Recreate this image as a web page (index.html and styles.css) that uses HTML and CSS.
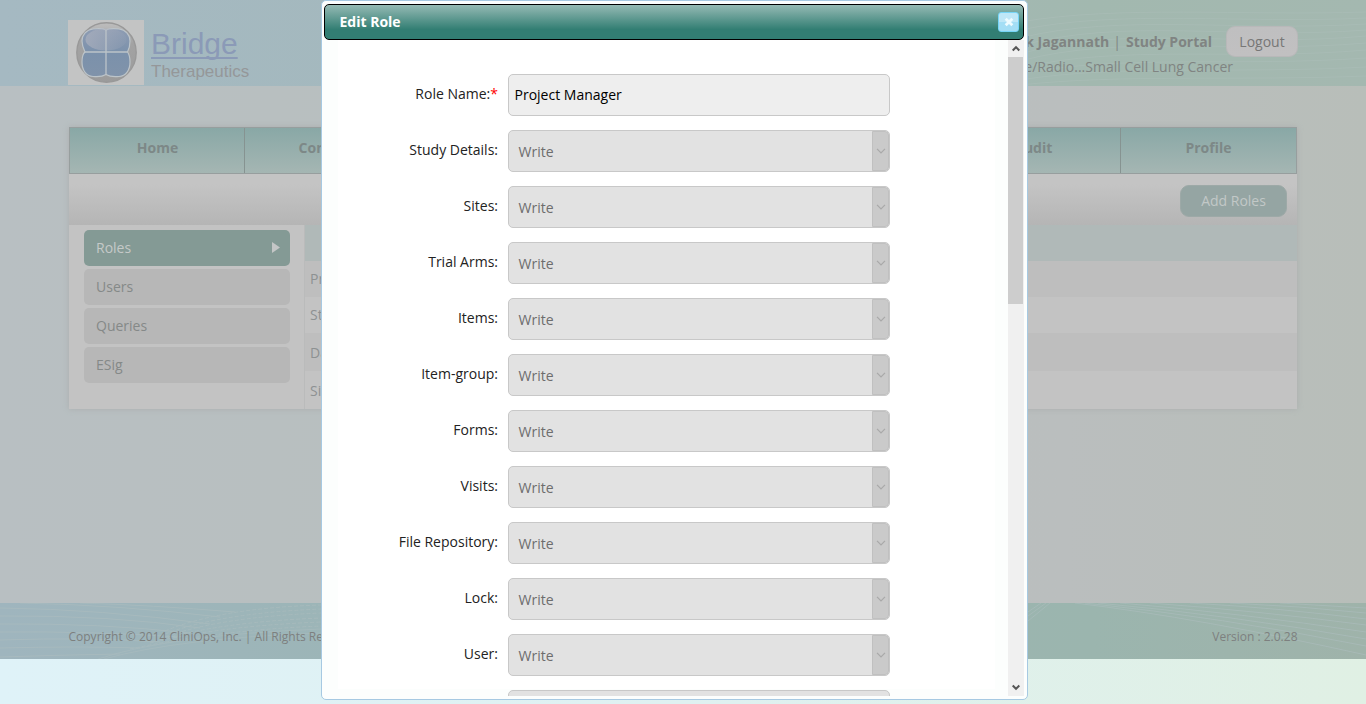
FILE: index.html
```html
<!DOCTYPE html>
<html lang="en">
<head>
<meta charset="utf-8">
<title>Edit Role</title>
<link rel="stylesheet" href="styles.css">
</head>
<body>
<header class="header">
  <svg class="waves" viewBox="0 0 1366 86" preserveAspectRatio="none" fill="none" stroke="#adbfba" stroke-width="1" opacity=".55">
    <path d="M1020 22C1120 5 1240 16 1366 12M1020 30C1120 9 1240 24 1366 18M1020 38C1120 13 1240 32 1366 24M1020 46C1120 17 1240 40 1366 30M1020 54C1120 24 1240 48 1366 36M1020 61C1120 34 1240 54 1366 43M1020 68C1120 44 1240 61 1366 50M1020 74C1120 54 1240 67 1366 58M1020 80C1120 64 1240 74 1366 67M1020 85C1120 74 1240 81 1366 76"/>
  </svg>
  <div class="wrap header-row">
    <div class="brand">
      <svg class="brand-mark" width="76" height="65" viewBox="0 0 76 65">
        <defs>
          <linearGradient id="petal" x1="0" y1="0" x2="0" y2="1"><stop offset="0" stop-color="#8e9cb3"/><stop offset=".5" stop-color="#7b91ab"/><stop offset="1" stop-color="#8093aa"/></linearGradient>
          <linearGradient id="shine" x1="0" y1="0" x2="1" y2="0"><stop offset="0" stop-color="#a9afbd" stop-opacity=".75"/><stop offset="1" stop-color="#a9afbd" stop-opacity=".1"/></linearGradient>
          <linearGradient id="ring" x1="0" y1="0" x2="0" y2="1"><stop offset="0" stop-color="#bdbdbd"/><stop offset=".35" stop-color="#a3a3a3"/><stop offset="1" stop-color="#9b9b9b"/></linearGradient>
        </defs>
        <rect width="76" height="65" fill="#c3c4c4"/>
        <circle cx="38.500" cy="32.500" r="29.700" fill="url(#ring)" stroke="#999" stroke-width="1.400"/>
        <path d="M38 10C34 8 29 8.500 25 9C18 10 14 15 14 21C14 25 15.500 29 17 32C14.500 34 14 38 14 42C14 50 18 56 25 56.500C30 57 34 57 38 54.500C42 57 46 57 51 56.500C58 56 62 50 62 42C62 38 61 34 59.500 32C61 29 62 25 62 21C62 15 58 10 51 9C46 8.500 42 8 38 10Z" fill="url(#petal)" stroke="#bcc4c9" stroke-width="1.200"/>
        <ellipse cx="38" cy="19.500" rx="20.500" ry="11" fill="url(#shine)"/>
        <path d="M38 10V55M17 32H59.500" stroke="#bcc4c9" stroke-width="1.300"/>
      </svg>
      <div class="brand-text">
        <div class="brand-name">Bridge</div>
        <div class="brand-sub">Therapeutics</div>
      </div>
    </div>
    <div class="account">
      <div class="account-top"><b>Deepak Jagannath</b><span>|</span><b>Study Portal</b><button class="logout">Logout</button></div>
      <div class="study">e/Radio...Small Cell Lung Cancer</div>
    </div>
  </div>
</header>
<main class="main">
  <div class="wrap panel">
    <nav class="nav"><a>Home</a><a>Configure</a><a></a><a></a><a></a><a>Audit</a><a>Profile</a></nav>
    <div class="toolbar"><button class="add">Add Roles</button></div>
    <div class="content">
      <aside class="side">
        <a class="side-item active">Roles<svg width="8" height="12" viewBox="0 0 8 12"><path d="M0 0L8 5.500L0 11Z" fill="#c4c6c6"/></svg></a>
        <a class="side-item">Users</a>
        <a class="side-item">Queries</a>
        <a class="side-item">ESig</a>
      </aside>
      <div class="table">
        <div class="trow thead"></div>
        <div class="trow odd">Project Manager</div>
        <div class="trow">Study Manager</div>
        <div class="trow odd tall">Data Manager</div>
        <div class="trow tall">Site Manager</div>
      </div>
    </div>
  </div>
</main>
<footer class="footer">
  <svg class="waves" viewBox="0 0 1366 56" fill="none" stroke="#afbfc0" stroke-width="1" opacity=".55">
    <path d="M0 5Q100 6 210 21M0 13Q110 12 200 25M0 21Q100 20 190 30M0 29Q90 28 180 34M0 37Q90 34 160 39M0 45Q80 43 140 45M0 54Q60 52 120 51M20 0Q120 2 220 14M80 0Q150 2 235 9"/>
    <path d="M98 56Q170 32 321 26M104 56Q180 35 321 30" opacity=".8"/>
    <path stroke-dasharray="4 2" d="M165 28Q220 5 321 2M165 31Q220 10 321 6M165 34Q220 14 321 10M160 37Q220 19 321 15M150 40Q220 23 321 19M130 46Q220 27 321 23"/>
    <path d="M1028 9L1041 0M1028 13L1046 0M1028 18L1050 0M1075 0Q1200 15 1366 52M1085 0Q1220 14 1366 43M1098 0Q1230 12 1366 36M1120 0Q1240 10 1366 29M1150 0Q1260 8 1366 22M1190 0Q1280 5 1366 16M1230 0Q1300 3 1366 10M1280 0L1366 5"/>
  </svg>
  <div class="wrap footer-row"><span>Copyright © 2014 CliniOps, Inc. | All Rights Reserved.</span><span>Version : 2.0.28</span></div>
</footer>

<section class="dialog">
  <div class="dialog-title"><span>Edit Role</span>
    <button class="close"><svg width="10" height="10" viewBox="0 0 10 10"><path d="M1.700 1.700L8.300 8.300M8.300 1.700L1.700 8.300" stroke="#eefbff" stroke-width="2.800"/></svg></button>
  </div>
  <div class="dialog-main">
    <div class="form">
      <div class="field"><label>Role Name:<i>*</i></label><div class="input">Project Manager</div></div>
      <div class="field"><label>Study Details:</label><div class="select"><span>Write</span><em><svg width="10" height="6" viewBox="0 0 10 6"><path d="M1 .8L5 4.800L9 .8"/></svg></em></div></div>
      <div class="field"><label>Sites:</label><div class="select"><span>Write</span><em><svg width="10" height="6" viewBox="0 0 10 6"><path d="M1 .8L5 4.800L9 .8"/></svg></em></div></div>
      <div class="field"><label>Trial Arms:</label><div class="select"><span>Write</span><em><svg width="10" height="6" viewBox="0 0 10 6"><path d="M1 .8L5 4.800L9 .8"/></svg></em></div></div>
      <div class="field"><label>Items:</label><div class="select"><span>Write</span><em><svg width="10" height="6" viewBox="0 0 10 6"><path d="M1 .8L5 4.800L9 .8"/></svg></em></div></div>
      <div class="field"><label>Item-group:</label><div class="select"><span>Write</span><em><svg width="10" height="6" viewBox="0 0 10 6"><path d="M1 .8L5 4.800L9 .8"/></svg></em></div></div>
      <div class="field"><label>Forms:</label><div class="select"><span>Write</span><em><svg width="10" height="6" viewBox="0 0 10 6"><path d="M1 .8L5 4.800L9 .8"/></svg></em></div></div>
      <div class="field"><label>Visits:</label><div class="select"><span>Write</span><em><svg width="10" height="6" viewBox="0 0 10 6"><path d="M1 .8L5 4.800L9 .8"/></svg></em></div></div>
      <div class="field"><label>File Repository:</label><div class="select"><span>Write</span><em><svg width="10" height="6" viewBox="0 0 10 6"><path d="M1 .8L5 4.800L9 .8"/></svg></em></div></div>
      <div class="field"><label>Lock:</label><div class="select"><span>Write</span><em><svg width="10" height="6" viewBox="0 0 10 6"><path d="M1 .8L5 4.800L9 .8"/></svg></em></div></div>
      <div class="field"><label>User:</label><div class="select"><span>Write</span><em><svg width="10" height="6" viewBox="0 0 10 6"><path d="M1 .8L5 4.800L9 .8"/></svg></em></div></div>
      <div class="field"><label></label><div class="select plain"></div></div>
    </div>
    <div class="scrollbar">
      <div class="sb-btn"><svg width="8" height="7" viewBox="0 0 8 7"><path d="M.7 5.500L4 2.200L7.300 5.500"/></svg></div>
      <div class="sb-thumb"></div>
      <div class="sb-btn sb-down"><svg width="8" height="7" viewBox="0 0 8 7"><path d="M.7 1.500L4 4.800L7.300 1.500"/></svg></div>
    </div>
  </div>
</section>
</body>
</html>
```
FILE: styles.css
```css
* { box-sizing: border-box; }
html, body { margin: 0; height: 704px; overflow: hidden; }
body {
  position: relative;
  font: 14px/20px "Open Sans", "Noto Sans", sans-serif;
  color: #7f8585;
  background: linear-gradient(90deg, #dff2f8, #dff1f1 50%, #e0f0e4);
}
button { font: inherit; padding: 0; }
.wrap { width: 1229px; margin-left: 69px; }
.waves { position: absolute; left: 0; top: 0; width: 100%; height: 100%; }

.header { position: relative; height: 86px; background: linear-gradient(90deg, #a5b9c2, #a3b8ba 50%, #a2b8af 80%, #a4b8b0); }
.header-row { position: relative; display: flex; justify-content: space-between; }
.brand { display: flex; margin: 20px 0 0 -1px; }
.brand-mark { display: block; }
.brand-text { font-family: "Liberation Sans", Arial, sans-serif; padding: 7px 0 0 7px; }
.brand-name { font-size: 30px; line-height: 33px; color: #8b9ab7; text-decoration: underline; text-decoration-thickness: 2px; text-underline-offset: 3px; text-decoration-skip-ink: none; }
.brand-sub { margin-top: 2px; font-size: 17px; line-height: 20px; color: #959799; }
.account { display: flex; flex-direction: column; align-items: flex-end; padding-top: 26px; color: #808482; }
.account-top { display: flex; align-items: center; height: 31px; }
.account-top span { margin: 0 5px 0 4px; }
.logout { width: 72px; height: 31px; margin-left: 14px; border: 1px solid #b8b8b9; border-radius: 9px; background: linear-gradient(#bfbfc0, #c1c0c1); color: #777; }
.study { margin-right: 65px; }

.main { height: 517px; padding-top: 41px; background: linear-gradient(90deg, #b8bfc2, #b8bfbf 30%, #babebe 78%, #b8beb9); }
.panel { width: 1228px; height: 282px; box-shadow: 0 0 6px #aaaeae; background: #c3c3c3; }
.nav { display: grid; grid-template-columns: repeat(7, 1fr); height: 47px; border: 1px solid #979e9e; background: linear-gradient(#89a8a6, #a5b6b3); }
.nav a { padding-left: 1px; text-align: center; font-weight: bold; line-height: 40px; border-right: 1px solid #869391; color: #7d8887; }
.nav a:last-child { padding-left: 0; border: 0; }
.toolbar { height: 51px; display: flex; justify-content: flex-end; padding: 11px 10px 0 0; background: linear-gradient(#c4c4c4 20%, #b5b5b5); }
.add { width: 107px; height: 32px; border: 1px solid #9da9a7; border-radius: 9px; background: #95a5a3; color: #c2c8c7; }
.content { display: flex; height: 184px; }
.side { width: 236px; padding: 5px 14px 0 15px; border-right: 1px solid #babbbb; display: flex; flex-direction: column; gap: 3px; }
.side-item { display: flex; justify-content: space-between; align-items: center; height: 36px; padding: 0 10px 0 12px; border-radius: 5px; background: #b7b7b7; color: #858988; }
.side-item.active { background: #849a95; color: #c5c9c8; }
.table { flex: 1; }
.trow { height: 36px; padding-left: 5px; line-height: 36px; color: #8d9192; }
.thead { background: #b0b9b8; }
.odd { background: #bebebe; }
.tall { height: 38px; line-height: 40px; }

.footer { position: relative; height: 56px; background: linear-gradient(90deg, #9fb5be, #9cb5b7 25%, #9bb5ae 80%, #9fb3aa); }
.footer-row { position: relative; width: 1229px; margin-left: 68.5px; display: flex; justify-content: space-between; font-size: 12px; line-height: 68px; color: #7d807f; }

.dialog { position: absolute; left: 321px; top: 0; width: 707px; height: 700px; padding: 3px 3px 3px 2px; border: 1px solid #a6c9e2; border-radius: 5px; background: #fcfefd; }
.dialog-title { display: flex; justify-content: space-between; align-items: center; height: 36px; padding: 0 4px 0 14.5px; border: 1px solid #000; border-radius: 5px; background: linear-gradient(#95bab4, #327e73 72%, #327e73); color: #fff; font-weight: bold; }
.dialog-title span { margin-top: -1px; }
.close { display: flex; align-items: center; justify-content: center; width: 21px; height: 20px; border: 1px solid #77d5f7; border-radius: 3px; background: linear-gradient(#bfe7f7 50%, #a4def5 50%); }
.dialog-main { display: flex; justify-content: space-between; height: 656px; overflow: hidden; }
.form { width: 657px; height: 649px; margin-left: 14px; padding-top: 34px; display: flex; flex-direction: column; gap: 14px; background: #fff; }
.field { display: flex; flex: none; height: 42px; }
.field label { width: 160px; text-align: right; line-height: 40px; color: #222; }
.field label i { color: #f00; font-style: normal; }
.input, .select { width: 382px; height: 42px; margin-left: 10px; border: 1px solid #c8c8c8; border-radius: 5px; }
.input { padding-left: 5.5px; line-height: 40px; background: #eee; color: #000; }
.select { display: flex; justify-content: space-between; overflow: hidden; padding-left: 9.5px; line-height: 42px; background: #e2e2e2; color: #6d6d6d; }
.select em { display: flex; align-items: center; justify-content: center; width: 17px; background: #cacaca; border: 1px solid #c0c0c0; border-radius: 0 4px 4px 0; }
.select path { fill: none; stroke: #a9a9a9; stroke-width: 1.2; }
.scrollbar { width: 16px; display: flex; flex-direction: column; background: #f0f0f0; }
.sb-btn { display: flex; align-items: center; justify-content: center; width: 15px; height: 17px; }
.sb-btn path { fill: none; stroke: #555; stroke-width: 2; }
.sb-thumb { width: 15px; height: 247px; background: #cdcdcd; }
.sb-down { margin-top: auto; }
```
